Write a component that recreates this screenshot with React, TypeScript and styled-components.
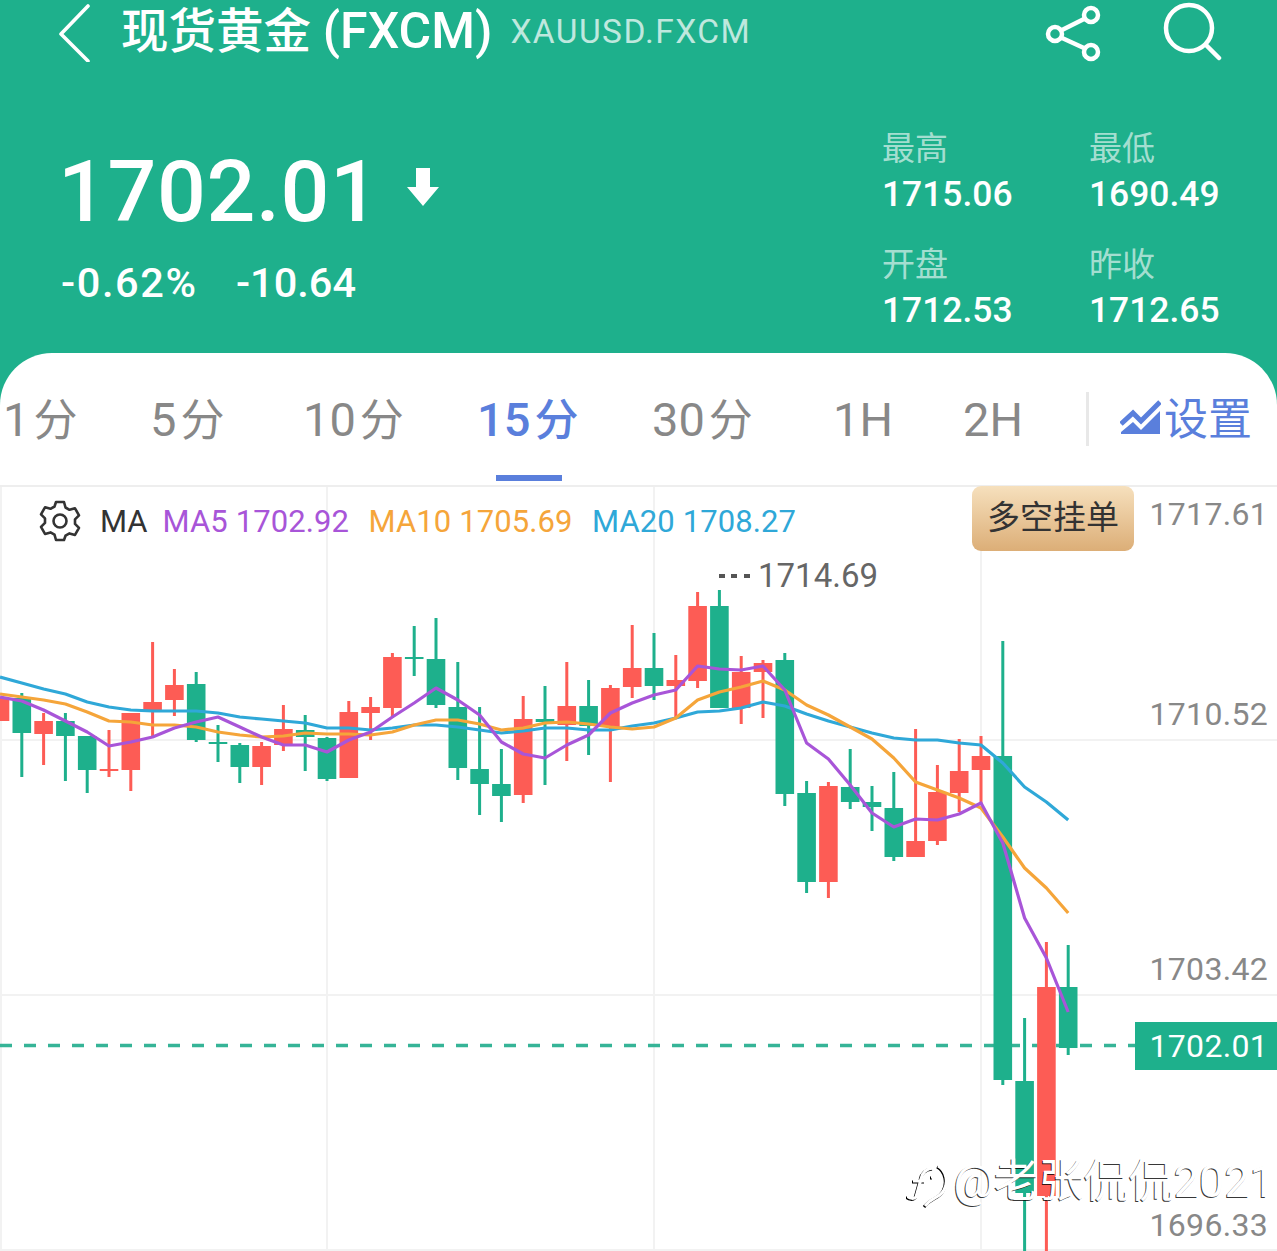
import React from "react";
import styled, { createGlobalStyle } from "styled-components";

const GREEN = "#1eb08c";
const RED = "#fd5c55";
const BLUE = "#5a7fdc";

const Global = createGlobalStyle`
  html, body { margin: 0; padding: 0; background: #fff; }
  #root { width: 1277px; height: 1251px; overflow: hidden; }
  * { box-sizing: border-box; }
`;

const Page = styled.div`
  width: 1277px;
  height: 1251px;
  background: ${GREEN};
  font-family: Roboto, "Noto Sans CJK SC", sans-serif;
  display: flex;
  flex-direction: column;
  overflow: hidden;
`;

const TopBar = styled.header`
  height: 64px;
  display: flex;
  align-items: center;
  padding-left: 58px;
  color: #fff;
`;
const BackIcon = styled.svg`
  width: 34px;
  height: 60px;
  margin-right: 29px;
  flex: none;
`;
const Title = styled.h1`
  margin: 0 0 2px;
  font-size: 47.5px;
  line-height: 60px;
  font-weight: 500;
  white-space: nowrap;
`;
const TitleCode = styled.span`
  font-size: 50px;
`;
const Symbol = styled.span`
  margin: 0 0 1px 18px;
  font-size: 33.5px;
  letter-spacing: 1.4px;
  font-weight: 400;
  color: rgba(255, 255, 255, 0.72);
  white-space: nowrap;
`;
const TopActions = styled.div`
  margin-left: auto;
  margin-right: 55px;
  display: flex;
  align-items: center;
  gap: 60px;
`;

const Quote = styled.section`
  height: 289px;
  display: flex;
  justify-content: space-between;
  padding: 0 58px 0 61px;
  color: #fff;
`;
const QuoteMain = styled.div`
  display: flex;
  flex-direction: column;
  padding-top: 78px;
`;
const PriceRow = styled.div`
  display: flex;
  align-items: center;
  height: 100px;
`;
const Price = styled.div`
  font-size: 86px;
  line-height: 100px;
  font-weight: 500;
  letter-spacing: 0.6px;
  margin-left: -3px;
`;
const DownArrow = styled.svg`
  width: 32px;
  height: 38px;
  margin: 0 0 10px 28px;
`;
const ChangeRow = styled.div`
  display: grid;
  grid-template-columns: 175px auto;
  margin-top: 17px;
  font-size: 41.5px;
  line-height: 48px;
  font-weight: 500;
`;
const ChangeValue = styled.span<{ $wide?: boolean }>`
  letter-spacing: ${(p) => (p.$wide ? "1.6px" : "0")};
`;
const Stats = styled.div`
  display: grid;
  grid-template-columns: 207px 129px;
  grid-auto-rows: 115.5px;
  padding-top: 63px;
`;
const Stat = styled.div`
  display: flex;
  flex-direction: column;
  margin-left: -1px;
`;
const StatLabel = styled.span`
  font-size: 33px;
  line-height: 44px;
  color: rgba(255, 255, 255, 0.62);
`;
const StatValue = styled.span`
  font-size: 35.4px;
  line-height: 46px;
  font-weight: 500;
`;

const Card = styled.main`
  flex: 1;
  background: #fff;
  border-radius: 52px 52px 0 0;
  display: flex;
  flex-direction: column;
  min-height: 0;
`;
const Tabs = styled.nav`
  height: 134px;
  flex: none;
  display: grid;
  grid-template-columns: 147px 153px 174px 175px 181px 130px 123px 1fr;
  align-items: center;
  padding: 0 25px 0 3px;
  border-bottom: 2px solid #eee;
`;
const Tab = styled.span<{ $active?: boolean }>`
  position: relative;
  justify-self: start;
  font-size: 47px;
  line-height: 60px;
  margin-top: 2px;
  color: ${(p) => (p.$active ? BLUE : "#888")};
  font-weight: ${(p) => (p.$active ? 500 : 400)};
  white-space: nowrap;
  &::after {
    content: "";
    display: ${(p) => (p.$active ? "block" : "none")};
    position: absolute;
    left: 19px;
    width: 66px;
    top: 85px;
    height: 6px;
    background: ${BLUE};
  }
`;
const TabUnit = styled.span`
  font-size: 44px;
  margin-left: 4px;
`;
const TabTail = styled.div`
  display: flex;
  align-items: center;
  height: 54px;
`;
const Divider = styled.i`
  width: 3px;
  height: 54px;
  background: #e8e8e8;
  margin-right: 31px;
`;
const SettingLabel = styled.span`
  display: flex;
  align-items: center;
  gap: 3px;
  margin-bottom: 6px;
  font-size: 44px;
  color: ${BLUE};
  white-space: nowrap;
`;

const ChartWrap = styled.section`
  position: relative;
  flex: 1;
  min-height: 0;
`;
const ChartSvg = styled.svg`
  display: block;
  width: 100%;
  height: 100%;
`;
const Legend = styled.div`
  position: absolute;
  left: 38px;
  top: 11px;
  display: flex;
  align-items: center;
  height: 46px;
  font-size: 31px;
  white-space: nowrap;
`;
const Gear = styled.svg`
  margin-right: 18px;
  flex: none;
`;
const LegendName = styled.span`
  color: #333;
  margin-right: 15px;
`;
const LegendItem = styled.span<{ $c: string }>`
  color: ${(p) => p.$c};
  margin-right: 19.5px;
  letter-spacing: 0.1px;
`;
const GoldButton = styled.button`
  position: absolute;
  left: 972px;
  top: -1px;
  width: 162px;
  height: 65px;
  border: 0;
  border-radius: 9px;
  padding: 0 0 8px;
  background: linear-gradient(#f6e0bd, #dcae77);
  color: #333;
  font: 400 33px "Noto Sans CJK SC", sans-serif;
`;
const AxisLabel = styled.span<{ $y: number }>`
  position: absolute;
  right: 9px;
  top: ${(p) => p.$y}px;
  font-size: 32px;
  line-height: 40px;
  letter-spacing: 0.3px;
  color: #888;
`;
const PriceTag = styled.span`
  position: absolute;
  right: 0;
  top: 535px;
  width: 142px;
  height: 48px;
  background: ${GREEN};
  color: #fff;
  font-size: 32px;
  line-height: 48px;
  letter-spacing: 0.3px;
  text-align: right;
  padding-right: 9px;
`;
const HighMark = styled.span`
  position: absolute;
  left: 719px;
  top: 68px;
  font-size: 33px;
  line-height: 42px;
  color: #666;
  display: flex;
  align-items: center;
  gap: 8px;
  white-space: nowrap;
`;
const HighDots = styled.i`
  width: 31px;
  height: 4px;
  background: repeating-linear-gradient(90deg, #555 0 6px, transparent 6px 12.5px);
`;
const Watermark = styled.div`
  position: absolute;
  right: 2px;
  top: 667px;
  display: flex;
  align-items: center;
  gap: 6px;
  color: #fff;
  font-size: 45px;
  line-height: 56px;
  font-weight: 400;
  text-shadow: -1px 1px 0 rgba(0, 0, 0, 0.8);
  white-space: nowrap;
`;
const WatermarkLogo = styled.svg`
  flex: none;
  margin-top: 6px;
  filter: drop-shadow(-1px 1px 0 #000);
`;

type Candle = [number, number, number, number, 0 | 1];
// bodyTop, bodyBottom, wickTop, wickBottom, 1 = red / 0 = green
const candles: Candle[] = [
  [698, 721, 698, 721, 1], [698, 733, 693, 777, 0], [721, 734, 713, 765, 1], [721, 736, 713, 781, 0],
  [736, 770, 736, 793, 0], [769, 770, 730, 777, 1], [713, 770, 713, 791, 1], [702, 710, 642, 738, 1],
  [685, 700, 669, 716, 1], [684, 740, 672, 742, 0], [742, 744, 725, 762, 0], [745, 767, 743, 783, 0],
  [746, 767, 742, 785, 1], [729, 745, 705, 751, 1], [730, 737, 715, 771, 0], [738, 779, 737, 781, 0],
  [712, 778, 701, 778, 1], [707, 713, 697, 740, 1], [657, 708, 653, 718, 1], [657, 658, 626, 676, 0],
  [659, 705, 618, 708, 0], [707, 768, 662, 780, 0], [769, 784, 707, 815, 0], [784, 796, 749, 822, 0],
  [719, 795, 696, 803, 1], [719, 722, 686, 785, 0], [706, 725, 662, 761, 1], [706, 726, 680, 755, 0],
  [688, 727, 685, 782, 1], [668, 687, 625, 698, 1], [668, 686, 633, 700, 0], [680, 686, 655, 717, 1],
  [606, 681, 592, 688, 1], [606, 708, 590, 708, 0], [672, 708, 656, 724, 1], [663, 672, 660, 718, 1],
  [660, 794, 653, 806, 0], [793, 882, 781, 893, 0], [786, 882, 782, 898, 1], [787, 802, 749, 809, 0],
  [802, 807, 786, 831, 0], [808, 857, 772, 861, 0], [841, 857, 729, 857, 1], [792, 841, 765, 845, 1],
  [771, 793, 739, 812, 1], [756, 770, 736, 803, 1], [756, 1080, 641, 1085, 0], [1081, 1193, 1018, 1251, 0],
  [987, 1196, 942, 1251, 1], [987, 1048, 945, 1055, 0],
];

const ma20 = [677, 683, 689, 694, 702, 707, 710, 711, 711, 711, 713, 717, 719, 721, 723, 728, 728, 730, 728, 725, 725, 727, 730, 733, 731, 728, 728, 730, 730, 726, 723, 718, 712, 711, 708, 702, 706, 714, 721, 727, 733, 738, 740, 740, 743, 745, 763, 787, 802, 820];
const ma10 = [694, 697, 700, 704, 712, 721, 722, 725, 725, 727, 732, 735, 737, 736, 733, 734, 734, 735, 732, 725, 720, 720, 724, 730, 728, 723, 722, 724, 727, 729, 727, 718, 700, 692, 687, 681, 690, 705, 715, 727, 739, 758, 782, 790, 798, 808, 837, 868, 888, 913];
const ma5 = [697, 701, 710, 721, 732, 746, 742, 737, 728, 722, 717, 727, 737, 745, 745, 752, 740, 732, 717, 703, 688, 700, 715, 742, 754, 758, 745, 735, 713, 703, 695, 690, 666, 669, 670, 666, 690, 743, 759, 785, 813, 827, 819, 820, 814, 803, 843, 918, 958, 1012];

const STEP = 21.8;
const cx = (i: number) => (i === 0 ? 0 : i * STEP);
const points = (a: number[]) => a.map((y, i) => `${cx(i)},${y}`).join(" ");

const tabs: [string, string][] = [
  ["1", "分"],
  ["5", "分"],
  ["10", "分"],
  ["15", "分"],
  ["30", "分"],
  ["1H", ""],
  ["2H", ""],
];
const stats = [
  ["最高", "1715.06"],
  ["最低", "1690.49"],
  ["开盘", "1712.53"],
  ["昨收", "1712.65"],
];

export default function App() {
  return (
    <Page>
      <Global />
      <TopBar>
        <BackIcon viewBox="0 0 34 60" fill="none" stroke="#fff" strokeWidth="3.6" strokeLinecap="round" strokeLinejoin="round">
          <path d="M30 4 3 32l27 27" />
        </BackIcon>
        <Title>
          现货黄金 <TitleCode>(FXCM)</TitleCode>
        </Title>
        <Symbol>XAUUSD.FXCM</Symbol>
        <TopActions>
          <svg width="60" height="60" viewBox="0 0 60 60" fill="none" stroke="#fff" strokeWidth="4.5">
            <circle cx="49" cy="13" r="7" />
            <circle cx="13" cy="32" r="7" />
            <circle cx="49" cy="50" r="7" />
            <path d="M19 28.5 43 16.5M19 35.5l24 11" />
          </svg>
          <svg width="60" height="60" viewBox="0 0 60 60" fill="none" stroke="#fff" strokeWidth="4.5" strokeLinecap="round">
            <circle cx="27" cy="26" r="23" />
            <path d="M44 43 57 56" />
          </svg>
        </TopActions>
      </TopBar>

      <Quote>
        <QuoteMain>
          <PriceRow>
            <Price>1702.01</Price>
            <DownArrow viewBox="0 0 32 38" fill="#fff">
              <path d="M9 0h14v19h9L16 38 0 19h9z" />
            </DownArrow>
          </PriceRow>
          <ChangeRow>
            <ChangeValue $wide>-0.62%</ChangeValue>
            <ChangeValue>-10.64</ChangeValue>
          </ChangeRow>
        </QuoteMain>
        <Stats>
          {stats.map(([k, v]) => (
            <Stat key={k}>
              <StatLabel>{k}</StatLabel>
              <StatValue>{v}</StatValue>
            </Stat>
          ))}
        </Stats>
      </Quote>

      <Card>
        <Tabs>
          {tabs.map(([n, u]) => (
            <Tab key={n} $active={n === "15"}>
              {n}
              {u && <TabUnit>{u}</TabUnit>}
            </Tab>
          ))}
          <TabTail>
            <Divider />
            <SettingLabel>
              <svg width="41" height="38" viewBox="0 0 41 38" fill={BLUE}>
                <path d="M1 37v-2L13 25l8 8L40 14v23z" />
                <path d="M1 27 13 16l8 8L40 5" fill="none" stroke={BLUE} strokeWidth="5" />
              </svg>
              设置
            </SettingLabel>
          </TabTail>
        </Tabs>

        <ChartWrap>
          <ChartSvg viewBox="0 487 1277 764" preserveAspectRatio="none">
            <g stroke="#f2f2f2" strokeWidth="2" fill="none">
              <path d="M1 487V1251M327 487V1251M654 487V1251M981 487V1251" />
              <path d="M0 740H1277M0 995H1277M0 1250H1277" />
            </g>
            <path d="M0 1045.5H1135" stroke="#36b497" strokeWidth="3.4" strokeDasharray="12 12" />
            {candles.map(([bt, bb, wt, wb, red], i) => {
              const x = cx(i);
              const c = red ? RED : GREEN;
              return (
                <g key={i} fill={c}>
                  <rect x={x - 1.5} y={wt} width="3" height={wb - wt} />
                  <rect x={x - 9.3} y={bt} width="18.6" height={Math.max(bb - bt, 2)} />
                </g>
              );
            })}
            <g fill="none" strokeWidth="3.2" strokeLinejoin="round">
              <polyline points={points(ma20)} stroke="#2fa8d8" />
              <polyline points={points(ma10)} stroke="#f5a53a" />
              <polyline points={points(ma5)} stroke="#a855d8" />
            </g>
          </ChartSvg>

          <Legend>
            <Gear width="44" height="44" viewBox="0 0 44 44" fill="none" stroke="#333" strokeWidth="2.6" strokeLinejoin="round">
              <path d="M18 3h8l1.5 5.5 4 2.3 5.5-1.5 4 7-4 4v4.6l4 4-4 7-5.5-1.5-4 2.3L26 41h-8l-1.5-5.3-4-2.3L7 34.9l-4-7 4-4v-4.6l-4-4 4-7 5.5 1.5 4-2.3z" />
              <circle cx="22" cy="22" r="6.5" />
            </Gear>
            <LegendName>MA</LegendName>
            <LegendItem $c="#a855d8">MA5 1702.92</LegendItem>
            <LegendItem $c="#f5a53a">MA10 1705.69</LegendItem>
            <LegendItem $c="#2fa8d8">MA20 1708.27</LegendItem>
          </Legend>
          <GoldButton>多空挂单</GoldButton>
          <HighMark>
            <HighDots />
            1714.69
          </HighMark>
          <AxisLabel $y={7}>1717.61</AxisLabel>
          <AxisLabel $y={207}>1710.52</AxisLabel>
          <AxisLabel $y={462}>1703.42</AxisLabel>
          <AxisLabel $y={718}>1696.33</AxisLabel>
          <PriceTag>1702.01</PriceTag>
          <Watermark>
            <WatermarkLogo width="40" height="45" viewBox="0 0 40 45" fill="none" stroke="#fff" strokeWidth="3">
              <path d="M26 5C18 6 15 10 14 16L9 34C7 36 3 36 0 33" />
              <path d="M6 18H18M24 14h2" />
              <path d="M31 3C40 8 41 20 37 27C33 35 25 34 18 43" />
            </WatermarkLogo>
            @老张侃侃2021
          </Watermark>
        </ChartWrap>
      </Card>
    </Page>
  );
}
